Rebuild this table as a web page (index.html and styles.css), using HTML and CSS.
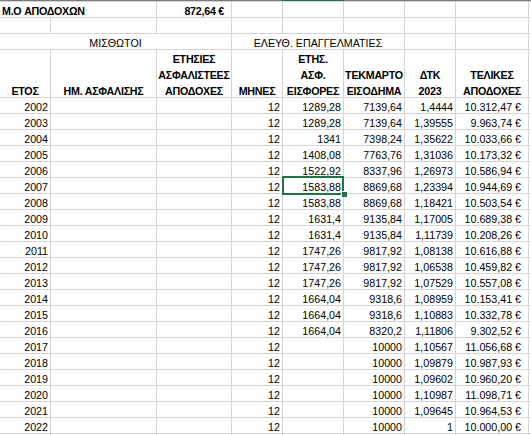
FILE: index.html
```html
<!DOCTYPE html>
<html lang="el">
<head>
<meta charset="utf-8">
<title>Sheet</title>
<link rel="stylesheet" href="styles.css">
</head>
<body>
<div class="sheet">
  <div class="colbar"><span class="colbar-sel"></span></div>
  <div class="grid">
    <!-- row 1 -->
    <div class="cell l b span2">M.O ΑΠΟΔΟΧΩΝ</div>
    <div class="cell r b cur">872,64 €</div>
    <div class="cell"></div><div class="cell"></div><div class="cell"></div><div class="cell"></div><div class="cell"></div><div class="cell"></div>
    <!-- row 2 -->
    <div class="cell"></div><div class="cell"></div><div class="cell"></div><div class="cell"></div><div class="cell"></div><div class="cell"></div><div class="cell"></div><div class="cell"></div><div class="cell"></div>
    <!-- row 3 -->
    <div class="cell c span3">ΜΙΣΘΩΤΟΙ</div>
    <div class="cell c span3">ΕΛΕΥΘ. ΕΠΑΓΓΕΛΜΑΤΙΕΣ</div>
    <div class="cell"></div><div class="cell"></div><div class="cell"></div>
    <!-- header -->
    <div class="cell c b hd"><span>ΕΤΟΣ</span></div>
    <div class="cell c b hd"><span>ΗΜ. ΑΣΦΑΛΙΣΗΣ</span></div>
    <div class="cell c b hd"><span>ΕΤΗΣΙΕΣ<br>ΑΣΦΑΛΙΣΤΕΕΣ<br>ΑΠΟΔΟΧΕΣ</span></div>
    <div class="cell c b hd"><span>ΜΗΝΕΣ</span></div>
    <div class="cell c b hd"><span>ΕΤΗΣ.<br>ΑΣΦ.<br>ΕΙΣΦΟΡΕΣ</span></div>
    <div class="cell c b hd"><span>ΤΕΚΜΑΡΤΟ<br>ΕΙΣΟΔΗΜΑ</span></div>
    <div class="cell c b hd"><span>ΔΤΚ<br>2023</span></div>
    <div class="cell c b hd"><span>ΤΕΛΙΚΕΣ<br>ΑΠΟΔΟΧΕΣ</span></div>
    <div class="cell hd"></div>

    <div class="cell r">2002</div><div class="cell"></div><div class="cell"></div><div class="cell r">12</div><div class="cell r">1289,28</div><div class="cell r">7139,64</div><div class="cell r">1,4444</div><div class="cell r cur">10.312,47 €</div><div class="cell"></div>
    <div class="cell r">2003</div><div class="cell"></div><div class="cell"></div><div class="cell r">12</div><div class="cell r">1289,28</div><div class="cell r">7139,64</div><div class="cell r">1,39555</div><div class="cell r cur">9.963,74 €</div><div class="cell"></div>
    <div class="cell r">2004</div><div class="cell"></div><div class="cell"></div><div class="cell r">12</div><div class="cell r">1341</div><div class="cell r">7398,24</div><div class="cell r">1,35622</div><div class="cell r cur">10.033,66 €</div><div class="cell"></div>
    <div class="cell r">2005</div><div class="cell"></div><div class="cell"></div><div class="cell r">12</div><div class="cell r">1408,08</div><div class="cell r">7763,76</div><div class="cell r">1,31036</div><div class="cell r cur">10.173,32 €</div><div class="cell"></div>
    <div class="cell r">2006</div><div class="cell"></div><div class="cell"></div><div class="cell r">12</div><div class="cell r">1522,92</div><div class="cell r">8337,96</div><div class="cell r">1,26973</div><div class="cell r cur">10.586,94 €</div><div class="cell"></div>
    <div class="cell r">2007</div><div class="cell"></div><div class="cell"></div><div class="cell r">12</div><div class="cell r sel">1583,88<span class="sel-box"></span><span class="sel-handle"></span></div><div class="cell r">8869,68</div><div class="cell r">1,23394</div><div class="cell r cur">10.944,69 €</div><div class="cell"></div>
    <div class="cell r">2008</div><div class="cell"></div><div class="cell"></div><div class="cell r">12</div><div class="cell r">1583,88</div><div class="cell r">8869,68</div><div class="cell r">1,18421</div><div class="cell r cur">10.503,54 €</div><div class="cell"></div>
    <div class="cell r">2009</div><div class="cell"></div><div class="cell"></div><div class="cell r">12</div><div class="cell r">1631,4</div><div class="cell r">9135,84</div><div class="cell r">1,17005</div><div class="cell r cur">10.689,38 €</div><div class="cell"></div>
    <div class="cell r">2010</div><div class="cell"></div><div class="cell"></div><div class="cell r">12</div><div class="cell r">1631,4</div><div class="cell r">9135,84</div><div class="cell r">1,11739</div><div class="cell r cur">10.208,26 €</div><div class="cell"></div>
    <div class="cell r">2011</div><div class="cell"></div><div class="cell"></div><div class="cell r">12</div><div class="cell r">1747,26</div><div class="cell r">9817,92</div><div class="cell r">1,08138</div><div class="cell r cur">10.616,88 €</div><div class="cell"></div>
    <div class="cell r">2012</div><div class="cell"></div><div class="cell"></div><div class="cell r">12</div><div class="cell r">1747,26</div><div class="cell r">9817,92</div><div class="cell r">1,06538</div><div class="cell r cur">10.459,82 €</div><div class="cell"></div>
    <div class="cell r">2013</div><div class="cell"></div><div class="cell"></div><div class="cell r">12</div><div class="cell r">1747,26</div><div class="cell r">9817,92</div><div class="cell r">1,07529</div><div class="cell r cur">10.557,08 €</div><div class="cell"></div>
    <div class="cell r">2014</div><div class="cell"></div><div class="cell"></div><div class="cell r">12</div><div class="cell r">1664,04</div><div class="cell r">9318,6</div><div class="cell r">1,08959</div><div class="cell r cur">10.153,41 €</div><div class="cell"></div>
    <div class="cell r">2015</div><div class="cell"></div><div class="cell"></div><div class="cell r">12</div><div class="cell r">1664,04</div><div class="cell r">9318,6</div><div class="cell r">1,10883</div><div class="cell r cur">10.332,78 €</div><div class="cell"></div>
    <div class="cell r">2016</div><div class="cell"></div><div class="cell"></div><div class="cell r">12</div><div class="cell r">1664,04</div><div class="cell r">8320,2</div><div class="cell r">1,11806</div><div class="cell r cur">9.302,52 €</div><div class="cell"></div>
    <div class="cell r">2017</div><div class="cell"></div><div class="cell"></div><div class="cell r">12</div><div class="cell"></div><div class="cell r">10000</div><div class="cell r">1,10567</div><div class="cell r cur">11.056,68 €</div><div class="cell"></div>
    <div class="cell r">2018</div><div class="cell"></div><div class="cell"></div><div class="cell r">12</div><div class="cell"></div><div class="cell r">10000</div><div class="cell r">1,09879</div><div class="cell r cur">10.987,93 €</div><div class="cell"></div>
    <div class="cell r">2019</div><div class="cell"></div><div class="cell"></div><div class="cell r">12</div><div class="cell"></div><div class="cell r">10000</div><div class="cell r">1,09602</div><div class="cell r cur">10.960,20 €</div><div class="cell"></div>
    <div class="cell r">2020</div><div class="cell"></div><div class="cell"></div><div class="cell r">12</div><div class="cell"></div><div class="cell r">10000</div><div class="cell r">1,10987</div><div class="cell r cur">11.098,71 €</div><div class="cell"></div>
    <div class="cell r">2021</div><div class="cell"></div><div class="cell"></div><div class="cell r">12</div><div class="cell"></div><div class="cell r">10000</div><div class="cell r">1,09645</div><div class="cell r cur">10.964,53 €</div><div class="cell"></div>
    <div class="cell r">2022</div><div class="cell"></div><div class="cell"></div><div class="cell r">12</div><div class="cell"></div><div class="cell r">10000</div><div class="cell r">1</div><div class="cell r cur">10.000,00 €</div><div class="cell"></div>
    <div class="cell"></div><div class="cell"></div><div class="cell"></div><div class="cell"></div><div class="cell"></div><div class="cell"></div><div class="cell"></div><div class="cell"></div><div class="cell"></div>
  </div>
</div>
</body>
</html>
```

FILE: styles.css
```css
html, body {
  margin: 0;
  padding: 0;
  background: #ffffff;
  overflow: hidden;
}

.sheet {
  width: 531px;
  font-family: "Liberation Sans", Arial, sans-serif;
  font-size: 10.7px;
  color: #000000;
}

.colbar {
  display: grid;
  grid-template-columns: 50px 105px 74px 50px 60px 60px 50px 72px 1fr;
  column-gap: 1px;
  height: 1px;
  background: #7b7b7b;
}

.colbar-sel {
  grid-column: 5;
  margin: 0 -1px;
  background: #217346;
}

.grid {
  display: grid;
  grid-template-columns: 50px 105px 74px 50px 60px 60px 50px 72px 1fr;
  grid-template-rows: 15px 15px 15px 47px;
  grid-auto-rows: 15px;
  gap: 1px;
  padding-top: 1px;
  background: #d4d4d4;
}

.cell {
  background: #ffffff;
  display: flex;
  align-items: flex-end;
  line-height: 11.5px;
  padding: 0 2px;
  white-space: nowrap;
  min-width: 0;
}

.hd {
  line-height: 16px;
}

.hd span {
  margin-bottom: -2px;
  text-align: center;
}

.l { justify-content: flex-start; }
.r { justify-content: flex-end; }
.c { justify-content: center; }
.b { font-weight: bold; letter-spacing: -0.25px; }
.cur { padding-right: 7px; }

.span2 { grid-column: span 2; }
.span3 { grid-column: span 3; }

.sel {
  position: relative;
}

.sel-box {
  position: absolute;
  left: -1px;
  right: -1px;
  top: -2px;
  bottom: -2px;
  border: 2px solid #217346;
}

.sel-handle {
  position: absolute;
  width: 6px;
  height: 6px;
  right: -4px;
  bottom: -4px;
  box-sizing: border-box;
  background: #217346;
  border-left: 1px solid #ffffff;
  border-top: 1px solid #ffffff;
}
```
